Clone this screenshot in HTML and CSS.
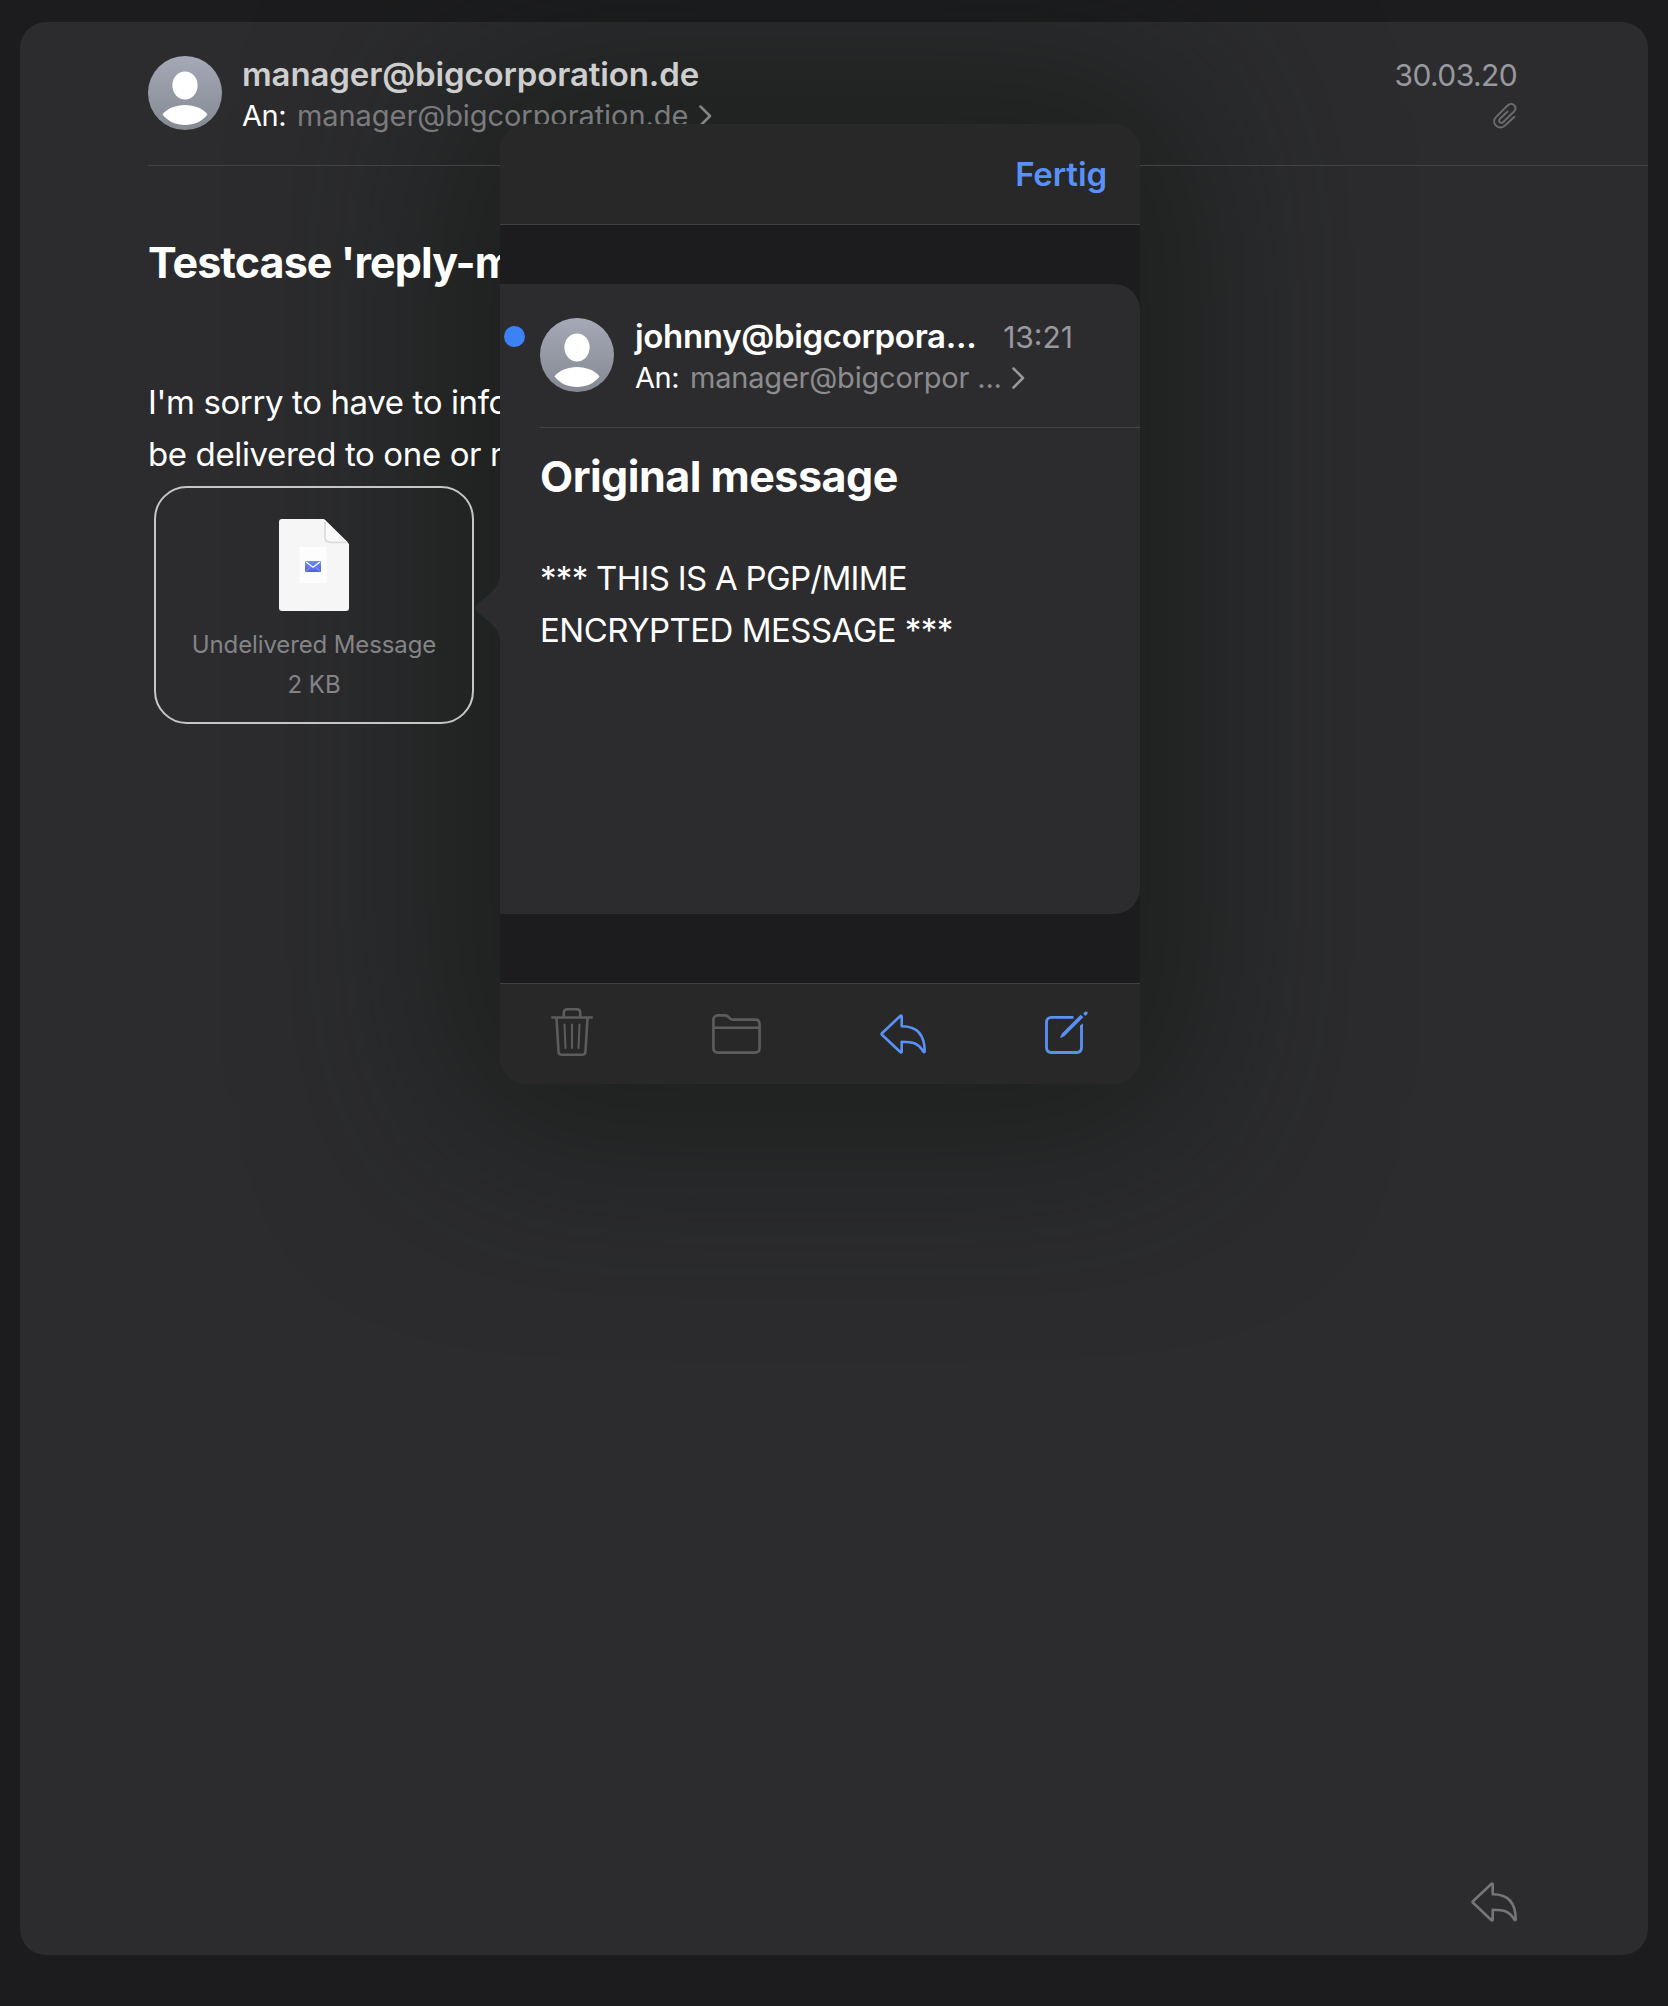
FILE: index.html
```html
<!DOCTYPE html>
<html lang="de">
<head>
<meta charset="utf-8">
<title>Mail</title>
<link rel="stylesheet" href="styles.css">
</head>
<body>
<svg class="defs" width="0" height="0">
  <defs>
    <linearGradient id="avatar-bg" x1="0" y1="0" x2="0" y2="1"><stop offset="0" stop-color="#a6a9b6"/><stop offset="1" stop-color="#858992"/></linearGradient>
    <linearGradient id="mail-bg" x1="0" y1="0" x2="0" y2="1"><stop offset="0" stop-color="#6c8ff0"/><stop offset="1" stop-color="#5260e6"/></linearGradient>
    <symbol id="avatar" viewBox="0 0 74 74">
      <circle cx="37" cy="37" r="37" fill="url(#avatar-bg)"/>
      <ellipse cx="37" cy="29.5" rx="12.6" ry="14" fill="#fff"/>
      <path d="M14.5 58.5C19 52.500 28 49 37 49S55 52.500 59.500 58.500C54 65.500 46 69 37 69S20 65.500 14.500 58.500Z" fill="#fff"/>
    </symbol>
    <symbol id="reply" viewBox="0 0 46 40">
      <path d="M20 2.200Q21.700 .8 21.700 2.500V12.300C38 12.300 44.700 21.500 44.700 37.500Q44.300 39 43.300 37.600C38.500 29.300 33 27.700 21.700 27.700V37.500Q21.700 39.200 20 37.800L2 20.700Q1.200 20 2 19.200Z" fill="none" stroke="currentColor" stroke-width="2.600" stroke-linejoin="round"/>
    </symbol>
    <symbol id="chevron" viewBox="0 0 13 22"><path d="M1.500 1.500 11 11 1.500 20.500" fill="none" stroke="currentColor" stroke-width="2.500" stroke-linecap="round" stroke-linejoin="round"/></symbol>
  </defs>
</svg>
<main class="mail">
  <header class="head">
    <svg class="avatar"><use href="#avatar"/></svg>
    <div class="people">
      <div class="name">manager@bigcorporation.de</div>
      <div class="to"><span class="to-label">An:</span><span class="to-addr">manager@bigcorporation.de</span><svg class="chevron"><use href="#chevron"/></svg></div>
    </div>
    <div class="meta">
      <div class="date">30.03.20</div>
      <svg class="clip" viewBox="0 0 24 27"><path d="M21.500 14.800 12.300 23.300C9.500 26.100 5.500 26.300 3 23.700S.5 17.500 3.200 14.800L14.600 3.500C16.600 1.500 19.300 1.300 21.100 3.100S22.900 7.500 21 9.500L10.300 20C9.200 21.100 7.800 21.200 6.800 20.200S5.900 17.800 7 16.700L14.600 9.500" fill="none" stroke="currentColor" stroke-width="1.900" stroke-linecap="round"/></svg>
    </div>
  </header>
  <h1 class="subject">Testcase 'reply-m</h1>
  <p class="text">I'm sorry to have to info<br>be delivered to one or m</p>
  <div class="attachment">
    <svg class="doc" viewBox="0 0 70 92">
      <path d="M3 0H45L70 25V89Q70 92 67 92H3Q0 92 0 89V3Q0 0 3 0Z" fill="#f6f6f6"/>
      <path d="M46 1V18Q46 23.500 51.500 23.500H69Z" fill="#fafafa"/>
      <path d="M46 3V18Q46 23.300 51.500 23.300H67" fill="none" stroke="#dcdcdc" stroke-width="1.800"/>
      <rect x="20.500" y="28" width="27" height="36" fill="#fdfdfd"/>
      <rect x="26" y="42" width="16" height="11" rx="1" fill="url(#mail-bg)"/>
      <path d="M27 43 34 48.300 41 43" fill="none" stroke="#fff" stroke-width="1.300"/>
      <path d="M27 52 31.500 48M41 52 36.500 48" stroke="#a9b4f5" stroke-width=".7"/>
    </svg>
    <div class="file-name">Undelivered Message</div>
    <div class="file-size">2 KB</div>
  </div>
  <svg class="reply-main"><use href="#reply"/></svg>

  <section class="popover">
    <svg class="arrow" viewBox="0 0 27 68"><path d="M27 0H26C26 9 22 14.500 16 19.500L4 29.500Q-2 34 4 38.500L16 48.500C22 53.500 26 59 26 68H27Z" fill="#2c2c2e"/></svg>
    <div class="panel">
      <div class="bar-top"><span class="done">Fertig</span></div>
      <div class="viewport">
        <article class="message">
          <header class="head head-small">
            <i class="unread"></i>
            <svg class="avatar"><use href="#avatar"/></svg>
            <div class="people">
              <div class="name-row"><span class="name">johnny@bigcorpora...</span><span class="time">13:21</span></div>
              <div class="to"><span class="to-label">An:</span><span class="to-addr to-short">manager@bigcorpor ...</span><svg class="chevron"><use href="#chevron"/></svg></div>
            </div>
          </header>
          <h2 class="subject">Original message</h2>
          <p class="text">*** THIS IS A PGP/MIME<br><span class="line2">ENCRYPTED MESSAGE ***</span></p>
        </article>
      </div>
      <div class="bar-bottom">
        <svg class="trash" viewBox="0 0 42 48"><g fill="none" stroke="currentColor" stroke-width="2.600" stroke-linecap="round" stroke-linejoin="round"><path d="M1.300 9.500H40.700M12.800 9V4.500Q12.800 1.300 16 1.300H26Q29.200 1.300 29.200 4.500V9M5.500 10 7.500 43.500Q7.700 46.700 10.500 46.700H31.500Q34.300 46.700 34.500 43.500L36.500 10"/><path stroke-width="2" d="M13.500 16.500 14.500 40M21 16.500V40M28.500 16.500 27.500 40"/></g></svg>
        <svg class="folder" viewBox="0 0 49 40"><path d="M1.400 13.800H47.600M1.400 34V6Q1.400 1.400 6 1.400H13Q15 1.400 16.500 3L18 4.400Q19.300 5.600 21 5.600H43Q47.600 5.600 47.600 10.200V34Q47.600 38.600 43 38.600H6Q1.400 38.600 1.400 34Z" fill="none" stroke="currentColor" stroke-width="2.600"/></svg>
        <svg class="reply"><use href="#reply"/></svg>
        <svg class="compose" viewBox="0 0 43 43"><path d="M28.500 6.400H6.500Q1.500 6.400 1.500 11.400V36.500Q1.500 41.500 6.500 41.500H31.500Q36.500 41.500 36.500 36.500V15.500" fill="none" stroke="currentColor" stroke-width="2.800"/><path d="M35 17V14.500L38 12.500V17Z" fill="currentColor"/><path d="M35.700 3.700 38.300 6.300 19.500 25.100 15.700 26.900Q15 26.800 15.300 26L17 22.400Z" fill="currentColor"/><path d="M38.200 2.600 40.200 .6Q41.400 0 42.300 1T42.300 3L40.300 4.900Z" fill="currentColor"/></svg>
      </div>
    </div>
  </section>
</main>
</body>
</html>
```
FILE: styles.css
```css
* { box-sizing: border-box; }
body {
  margin: 0;
  padding: 22px 20px 51px;
  height: 2006px;
  overflow: hidden;
  background: #1c1c1e;
  color: #fff;
  font-family: Inter, "Liberation Sans", sans-serif;
}
svg { display: block; flex: none; }
.defs { position: absolute; }
.mail {
  position: relative;
  z-index: 0;
  display: flex;
  flex-direction: column;
  height: 1933px;
  padding-left: 128px;
  border-radius: 26px;
  background: #2c2c2e;
}
.head {
  display: flex;
  height: 144px;
  padding-top: 34px;
  border-bottom: 1px solid #434345;
  white-space: nowrap;
}
.avatar { width: 74px; height: 74px; }
.people { margin: -2px 0 0 20px; }
.name { font-size: 33px; line-height: 40px; font-weight: 600; letter-spacing: -0.13px; color: #cecece; }
.to { display: flex; align-items: center; font-size: 29px; line-height: 43px; }
.to-label { width: 55px; letter-spacing: -0.4px; }
.to-addr { color: #7b7b7d; letter-spacing: -0.07px; }
.chevron { width: 13px; height: 22px; margin: 1px 0 0 11px; color: #858587; }
.meta {
  display: flex;
  flex-direction: column;
  align-items: flex-end;
  margin: -2px 131px 0 auto;
}
.date, .time { font-size: 30px; line-height: 42px; color: #98989f; }
.date { letter-spacing: -0.6px; }
.clip { width: 24px; height: 27px; margin-top: 6px; color: #6c6c6e; }
.subject { margin: 66px 0 0; font-size: 43px; line-height: 60px; font-weight: 700; white-space: nowrap; letter-spacing: -0.9px; }
.text { margin: 84px 0 0; font-size: 33px; line-height: 52px; white-space: nowrap; letter-spacing: -0.38px; }
.attachment {
  display: flex;
  flex-direction: column;
  align-items: center;
  width: 320px;
  height: 238px;
  margin: 6px 0 0 6px;
  padding-top: 31px;
  border: 2px solid #c6c6c6;
  border-radius: 33px;
  color: #848487;
  font-size: 24px;
  line-height: 40px;
}
.doc { width: 70px; height: 92px; margin-bottom: 14px; }
.file-name { letter-spacing: -0.12px; }
.reply, .reply-main { width: 46px; height: 40px; }
.reply-main { margin: auto 131px 33px auto; color: #767678; }

.popover { position: absolute; left: 480px; top: 102px; width: 640px; height: 960px; }
.popover::before {
  content: "";
  position: absolute;
  inset: 0;
  z-index: -1;
  border-radius: 26px;
  box-shadow: 0 0 190px 50px rgba(18, 24, 19, 0.66);
}
.arrow { position: absolute; left: -26px; top: 450px; width: 27px; height: 68px; }
.panel {
  display: flex;
  flex-direction: column;
  height: 100%;
  overflow: hidden;
  border-radius: 26px;
  background: #282828;
}
.bar-top {
  display: flex;
  align-items: center;
  justify-content: flex-end;
  height: 101px;
  padding-right: 33px;
  border-bottom: 1px solid #414142;
}
.done { color: #5a91f7; font-size: 33px; line-height: 40px; font-weight: 600; letter-spacing: -0.1px; }
.viewport { height: 758px; padding-top: 59px; background: #1c1c1e; }
.message { height: 630px; padding-left: 40px; border-radius: 0 26px 26px 0; background: #2c2c2e; }
.head-small { position: relative; }
.head-small .name { color: #fff; letter-spacing: -0.32px; }
.unread { position: absolute; left: -36px; top: 42px; width: 21px; height: 21px; border-radius: 50%; background: #3c82f6; }
.name-row { display: flex; justify-content: space-between; width: 438px; height: 40px; }
.head-small .people { margin-left: 21px; }
.head-small .to-addr { color: #8c8c8e; letter-spacing: -0.2px; }
.head-small .chevron { margin-left: 10px; color: #9a9a9c; }
.message .subject { margin-top: 18px; letter-spacing: -0.5px; }
.message .text { margin-top: 46px; letter-spacing: -0.7px; }
.message .line2 { letter-spacing: -0.53px; }
.bar-bottom {
  display: grid;
  grid-template-columns: 161px 168px 165px 1fr;
  align-items: start;
  height: 101px;
  padding: 24px 0 0 51px;
  border-top: 1px solid #414142;
}
.trash, .folder { color: #5c5c5d; }
.trash { width: 42px; height: 48px; }
.folder { width: 49px; height: 40px; margin-top: 6px; }
.reply, .compose { color: #5a91f7; }
.bar-bottom .reply { margin-top: 6px; }
.compose { width: 43px; height: 43px; margin-top: 3px; }
```
